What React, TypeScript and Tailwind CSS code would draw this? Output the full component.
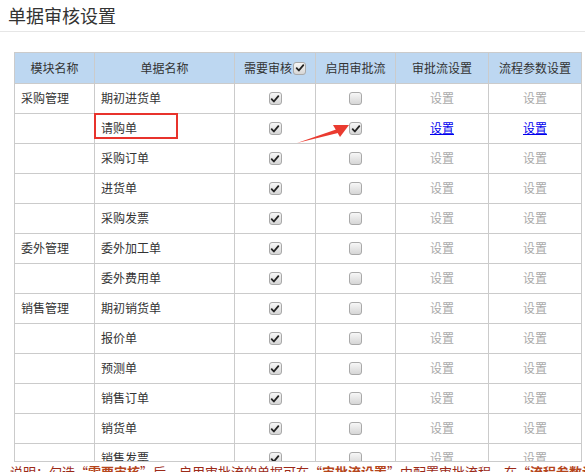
import React from "react"

type Row = { mod: string; doc: string; audit: boolean; flow: boolean }

const rows: Row[] = [
  { mod: "采购管理", doc: "期初进货单", audit: true, flow: false },
  { mod: "", doc: "请购单", audit: true, flow: true },
  { mod: "", doc: "采购订单", audit: true, flow: false },
  { mod: "", doc: "进货单", audit: true, flow: false },
  { mod: "", doc: "采购发票", audit: true, flow: false },
  { mod: "委外管理", doc: "委外加工单", audit: true, flow: false },
  { mod: "", doc: "委外费用单", audit: true, flow: false },
  { mod: "销售管理", doc: "期初销货单", audit: true, flow: false },
  { mod: "", doc: "报价单", audit: true, flow: false },
  { mod: "", doc: "预测单", audit: true, flow: false },
  { mod: "", doc: "销售订单", audit: true, flow: false },
  { mod: "", doc: "销货单", audit: true, flow: false },
  { mod: "", doc: "销售发票", audit: true, flow: false },
]

function Check({ on }: { on: boolean }) {
  return (
    <span className="inline-flex items-center justify-center w-[13px] h-[13px] rounded-[3px] border border-[#a9a9a9] bg-gradient-to-b from-[#f7f7f7] to-[#d6d6d6]">
      {on && (
        <svg viewBox="0 0 12 12" className="w-[10px] h-[10px]">
          <path d="M2 6.2 L4.6 9 L10 2.6" fill="none" stroke="#222" strokeWidth="2.2" strokeLinecap="round" strokeLinejoin="round" />
        </svg>
      )}
    </span>
  )
}

function Link({ on }: { on: boolean }) {
  return on ? <a className="text-[#0000ee] underline">设置</a> : <span className="text-[#aaa]">设置</span>
}

// column widths incl. right border
const cols = ["w-[80px]", "w-[140px]", "w-[81px]", "w-[80px]", "w-[93px]", "w-[93px]"]

export default function App() {
  const cell = "flex items-center border-r border-[#cbcbcb] shrink-0"
  return (
    <div className="w-[585px] h-[472px] overflow-hidden bg-white text-[#333] font-['Microsoft_YaHei','Noto_Sans_CJK_SC',sans-serif]">
      <div className="h-[32px] pl-[8px] pt-[2px] text-[18px] leading-[26px] text-[#333] border-b border-[#e6e6e6]">单据审核设置</div>

      <div className="relative mt-[20px] ml-[14px] w-[568px] h-[410px] overflow-hidden border-l border-t border-b border-[#cbcbcb] text-[12px] leading-[16px]">
        <div className="flex h-[31px] bg-[#bdd7f1] border-b border-[#cbcbcb]">
          <div className={`${cell} ${cols[0]} justify-center`}>模块名称</div>
          <div className={`${cell} ${cols[1]} justify-center`}>单据名称</div>
          <div className={`${cell} ${cols[2]} justify-center gap-[1px]`}>需要审核<Check on /></div>
          <div className={`${cell} ${cols[3]} justify-center`}>启用审批流</div>
          <div className={`${cell} ${cols[4]} justify-center`}>审批流设置</div>
          <div className={`${cell} ${cols[5]} justify-center`}>流程参数设置</div>
        </div>

        {rows.map((r) => (
          <div key={r.doc} className="flex h-[30px] border-b border-[#cbcbcb]">
            <div className={`${cell} ${cols[0]} pl-[6px] pb-[1px]`}>{r.mod}</div>
            <div className={`${cell} ${cols[1]} pl-[6px] pb-[1px]`}>{r.doc}</div>
            <div className={`${cell} ${cols[2]} justify-center`}><Check on={r.audit} /></div>
            <div className={`${cell} ${cols[3]} justify-center`}><Check on={r.flow} /></div>
            <div className={`${cell} ${cols[4]} justify-center pb-[1px]`}><Link on={r.flow} /></div>
            <div className={`${cell} ${cols[5]} justify-center pb-[1px]`}><Link on={r.flow} /></div>
          </div>
        ))}

        {/* red highlight box + arrow annotation */}
        <div className="absolute left-[79px] top-[60px] w-[84px] h-[26px] border-2 border-[#e8332c]" />
        <svg className="absolute left-[249px] top-[59px]" width="110" height="40" viewBox="0 0 110 40">
          <polygon points="33,31 75,16.5 76,20.5" fill="#ea3b30" />
          <polygon points="85,13 69,13 76,25" fill="#ea3b30" />
        </svg>
      </div>

      <div className="pl-[10px] pt-[3px] text-[13px] leading-[14px] text-[#9c2a18] whitespace-nowrap">
        说明：勾选“<b className="text-[#b5451b]">需要审核</b>”后，启用审批流的单据可在“<b className="text-[#b5451b]">审批流设置</b>”中配置审批流程，在“<b className="text-[#b5451b]">流程参数设置</b>”中设置参数。
      </div>
    </div>
  )
}
